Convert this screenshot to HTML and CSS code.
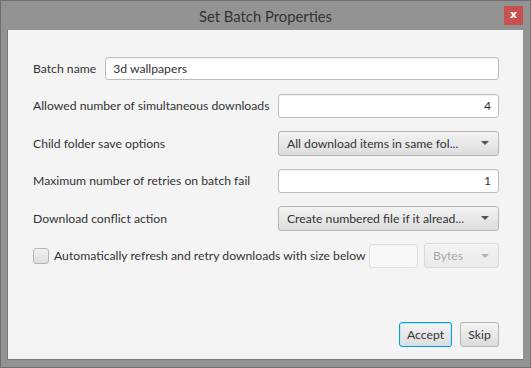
FILE: index.html
```html
<!DOCTYPE html>
<html lang="en">
<head>
    <meta charset="UTF-8">
    <title>Set Batch Properties</title>
    <link rel="stylesheet" href="styles.css">
</head>
<body>
    <div class="window">
        <div class="titlebar">
            <span></span>
            <span class="title">Set Batch Properties</span>
            <span class="close">x</span>
        </div>
        <div class="content">
            <div class="row">
                <label class="label name">Batch name</label>
                <div class="field wide">3d wallpapers</div>
            </div>
            <div class="row">
                <label class="label">Allowed number of simultaneous downloads</label>
                <div class="field num">4</div>
            </div>
            <div class="row">
                <label class="label">Child folder save options</label>
                <div class="combo">All download items in same fol...<span class="arrow"></span></div>
            </div>
            <div class="row">
                <label class="label">Maximum number of retries on batch fail</label>
                <div class="field num">1</div>
            </div>
            <div class="row">
                <label class="label">Download conflict action</label>
                <div class="combo">Create numbered file if it alread...<span class="arrow"></span></div>
            </div>
            <div class="row">
                <span class="check"></span>
                <label class="label">Automatically refresh and retry downloads with size below</label>
                <div class="field small disabled"></div>
                <div class="combo bytes disabled">Bytes<span class="arrow"></span></div>
            </div>
            <div class="buttons">
                <button class="btn default">Accept</button>
                <button class="btn">Skip</button>
            </div>
        </div>
    </div>
</body>
</html>
```

FILE: styles.css
```css
body {
    margin: 0;
    font-family: Lato, "Open Sans", sans-serif;
}
.window {
    width: 531px;
    height: 368px;
    box-sizing: border-box;
    border: 1px solid #6f6f6f;
    background-color: #939393;
    display: flex;
    flex-direction: column;
}
.titlebar {
    height: 29px;
    display: grid;
    grid-template-columns: 1fr auto 1fr;
    align-items: start;
}
.title {
    font-size: 14.8px;
    color: #333;
    line-height: 31px;
}
.close {
    justify-self: end;
    margin: 5px 7px 0 0;
    width: 19px;
    height: 19px;
    background-color: #c75050;
    color: #fff;
    font-family: "DejaVu Sans", sans-serif;
    font-weight: bold;
    font-size: 11px;
    line-height: 18px;
    text-align: center;
}
.content {
    flex: 1;
    margin: 0 7px 7px 6px;
    border-left: 1px solid #777;
    border-bottom: 1px solid #777;
    background-color: #f4f4f4;
    padding: 26px 24px 0 25px;
    display: flex;
    flex-direction: column;
    gap: 13.6px;
    font-size: 12.2px;
    color: #333;
}
.row {
    display: flex;
    align-items: center;
    height: 24px;
}
.label {
    flex: 1;
    white-space: nowrap;
}
.label.name {
    flex: none;
    margin-right: 9px;
}
.field {
    flex: none;
    box-sizing: border-box;
    height: 24px;
    width: 221px;
    background-color: #fff;
    border: 1px solid #bdbdbd;
    border-radius: 3px;
    box-shadow: inset 0 1px 1px rgba(0, 0, 0, 0.06);
    padding: 0 7px;
    line-height: 22px;
}
.field.wide {
    flex: 1;
    height: 23px;
    line-height: 21px;
}
.field.num {
    text-align: right;
}
.combo {
    flex: none;
    box-sizing: border-box;
    height: 25px;
    width: 221px;
    border: 1px solid #b5b5b5;
    border-radius: 3px;
    background: linear-gradient(#f3f3f3, #dddddd);
    padding: 0 8px;
    line-height: 23px;
    display: flex;
    justify-content: space-between;
    align-items: center;
    white-space: nowrap;
}
.arrow {
    width: 0;
    height: 0;
    border-left: 4px solid transparent;
    border-right: 4px solid transparent;
    border-top: 4px solid #555;
    margin-right: 1px;
}
.check {
    flex: none;
    box-sizing: border-box;
    width: 16px;
    height: 16px;
    border: 1px solid #b5b5b5;
    border-radius: 3px;
    background: linear-gradient(#f2f2f2, #dedede);
    margin-right: 5px;
}
.field.small {
    width: 49px;
}
.combo.bytes {
    width: 75px;
    margin-left: 6px;
}
.disabled {
    opacity: 0.4;
}
.buttons {
    margin-top: 40px;
    display: flex;
    justify-content: flex-end;
    gap: 8px;
}
.btn {
    box-sizing: border-box;
    height: 25px;
    width: 39px;
    font-family: inherit;
    font-size: 12.2px;
    color: #333;
    border: 1px solid #b5b5b5;
    border-radius: 3px;
    background: linear-gradient(#f3f3f3, #dddddd);
    padding: 0;
}
.btn.default {
    width: 53px;
    border: 1px solid #039ed3;
    box-shadow: inset 0 0 0 1px #bfe6f5;
}
```
